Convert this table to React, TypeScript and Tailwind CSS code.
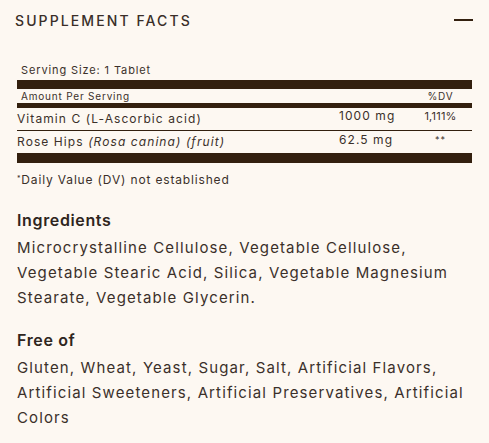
import React from "react";

export default function App() {
  const font = { fontFamily: "Inter, 'Noto Sans', sans-serif" };
  return (
    <div className="w-[489px] h-[443px] bg-[#fdf8f2] text-[#3b302a] overflow-hidden tracking-[0.06em]" style={font}>
      <div className="flex items-center justify-between h-[40px] pl-[15px] pr-[16px]">
        <div className="text-[14px] tracking-[0.15em] text-[#3a2e28] font-medium">SUPPLEMENT FACTS</div>
        <div className="w-[19px] h-[1.5px] bg-[#33200f]" />
      </div>
      <div className="px-[17px] mt-[23px]">
        <div className="text-[11px] leading-[14px] pl-[4px] h-[17px] tracking-[0.08em]">Serving Size: 1 Tablet</div>
        <div className="h-[9px] bg-[#33200f]" />
        <div className="grid grid-cols-[322px_71px_61px] text-[10px] leading-[14px] h-[14px] tracking-[0.08em]">
          <div className="pl-[4px]">Amount Per Serving</div>
          <div />
          <div className="text-center">%DV</div>
        </div>
        <div className="h-[5px] bg-[#33200f]" />
        <div className="grid grid-cols-[322px_71px_61px] text-[12px] items-center h-[23px] border-b border-[#33200f] tracking-[0.09em]">
          <div>Vitamin C (L-Ascorbic acid)</div>
          <div className="-mt-[6px]">1000 mg</div>
          <div className="text-center text-[11px] tracking-[0.02em] -mt-[6px]">1,111%</div>
        </div>
        <div className="grid grid-cols-[322px_71px_61px] text-[12px] items-center h-[22px] tracking-[0.09em]">
          <div>
            Rose Hips <i>(Rosa canina) (fruit)</i>
          </div>
          <div className="-mt-[4px]">62.5 mg</div>
          <div className="text-center text-[9px] -mt-[4px]">**</div>
        </div>
        <div className="h-[10px] bg-[#33200f]" />
        <div className="text-[12px] leading-[16px] mt-[9px] tracking-[0.07em]">
          <sup className="text-[7px]">*</sup>Daily Value (DV) not established
        </div>
        <h3 className="text-[16px] font-semibold leading-[20px] mt-[22px] text-[#2f2520] tracking-[0.04em]">Ingredients</h3>
        <p className="text-[15px] leading-[25px] mt-[5px] tracking-[0.075em]">
          Microcrystalline Cellulose, Vegetable Cellulose, Vegetable Stearic Acid, Silica, Vegetable Magnesium Stearate, Vegetable Glycerin.
        </p>
        <h3 className="text-[16px] font-semibold leading-[20px] mt-[20px] text-[#2f2520] tracking-[0.04em]">Free of</h3>
        <p className="text-[15px] leading-[25px] mt-[5px] tracking-[0.075em]">
          Gluten, Wheat, Yeast, Sugar, Salt, Artificial Flavors, Artificial Sweeteners, Artificial Preservatives, Artificial Colors
        </p>
      </div>
    </div>
  );
}
